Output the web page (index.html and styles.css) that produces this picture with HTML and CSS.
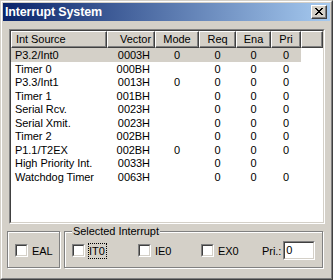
FILE: index.html
```html
<!DOCTYPE html>
<html>
<head>
<meta charset="utf-8">
<link rel="stylesheet" href="styles.css">
</head>
<body>
<div class="window">
  <div class="frame">
    <div class="caption">
      <span class="title">Interrupt System</span>
      <div class="close">
        <svg width="8" height="7" viewBox="0 0 8 7" shape-rendering="crispEdges">
          <path fill="#000" d="M0 0h2v1H0zM6 0h2v1H6zM1 1h2v1H1zM5 1h2v1H5zM2 2h4v1H2zM3 3h2v1H3zM2 4h4v1H2zM1 5h2v1H1zM5 5h2v1H5zM0 6h2v1H0zM6 6h2v1H6z"/>
        </svg>
      </div>
    </div>
    <div class="body">
      <div class="listbox">
        <div class="listinner">
          <div class="header">
            <div class="hcell c1 left">Int Source</div>
            <div class="hcell c2 right">Vector</div>
            <div class="hcell c3">Mode</div>
            <div class="hcell c4">Req</div>
            <div class="hcell c5">Ena</div>
            <div class="hcell c6">Pri</div>
            <div class="hcell cf"></div>
          </div>
          <div class="rows">
            <div class="row sel"><span class="c1 left">P3.2/Int0</span><span class="c2 right">0003H</span><span class="c3">0</span><span class="c4">0</span><span class="c5">0</span><span class="c6">0</span></div>
            <div class="row"><span class="c1 left">Timer 0</span><span class="c2 right">000BH</span><span class="c3"></span><span class="c4">0</span><span class="c5">0</span><span class="c6">0</span></div>
            <div class="row"><span class="c1 left">P3.3/Int1</span><span class="c2 right">0013H</span><span class="c3">0</span><span class="c4">0</span><span class="c5">0</span><span class="c6">0</span></div>
            <div class="row"><span class="c1 left">Timer 1</span><span class="c2 right">001BH</span><span class="c3"></span><span class="c4">0</span><span class="c5">0</span><span class="c6">0</span></div>
            <div class="row"><span class="c1 left">Serial Rcv.</span><span class="c2 right">0023H</span><span class="c3"></span><span class="c4">0</span><span class="c5">0</span><span class="c6">0</span></div>
            <div class="row"><span class="c1 left">Serial Xmit.</span><span class="c2 right">0023H</span><span class="c3"></span><span class="c4">0</span><span class="c5">0</span><span class="c6">0</span></div>
            <div class="row"><span class="c1 left">Timer 2</span><span class="c2 right">002BH</span><span class="c3"></span><span class="c4">0</span><span class="c5">0</span><span class="c6">0</span></div>
            <div class="row"><span class="c1 left">P1.1/T2EX</span><span class="c2 right">002BH</span><span class="c3">0</span><span class="c4">0</span><span class="c5">0</span><span class="c6">0</span></div>
            <div class="row"><span class="c1 left">High Priority Int.</span><span class="c2 right">0033H</span><span class="c3"></span><span class="c4">0</span><span class="c5">0</span><span class="c6"></span></div>
            <div class="row"><span class="c1 left">Watchdog Timer</span><span class="c2 right">0063H</span><span class="c3"></span><span class="c4">0</span><span class="c5">0</span><span class="c6">0</span></div>
          </div>
        </div>
      </div>
      <div class="bottom">
        <div class="group g-eal">
          <span class="cb"><span class="cbi"></span></span><span class="lbl">EAL</span>
        </div>
        <div class="group g-sel">
          <span class="legend">Selected Interrupt</span>
          <div class="item w1"><span class="cb"><span class="cbi"></span></span><span class="lbl focus">IT0</span></div>
          <div class="item w2"><span class="cb"><span class="cbi"></span></span><span class="lbl">IE0</span></div>
          <div class="item w3"><span class="cb"><span class="cbi"></span></span><span class="lbl">EX0</span></div>
          <span class="pri">Pri.:</span>
          <div class="num"><div class="numi">0</div></div>
        </div>
      </div>
    </div>
  </div>
</div>
</body>
</html>
```
FILE: styles.css
```css
* { box-sizing: border-box; }
html, body { margin: 0; padding: 0; }
body {
  width: 333px;
  height: 280px;
  overflow: hidden;
  background: #d4d0c8;
  font-family: "Liberation Sans", Arial, sans-serif;
  font-size: 11px;
  letter-spacing: -0.05px;
  color: #000;
}
.window {
  width: 333px;
  height: 280px;
  border: 1px solid;
  border-color: #d4d0c8 #404040 #404040 #d4d0c8;
  background: #d4d0c8;
}
.frame {
  height: 100%;
  border: 1px solid;
  border-color: #fff #808080 #808080 #fff;
  padding: 1px;
  display: flex;
  flex-direction: column;
}
.caption {
  height: 18px;
  flex: none;
  display: flex;
  align-items: center;
  background: linear-gradient(to right, #0a246a, #a6caf0);
  padding: 0 3px 0 2px;
}
.title {
  flex: 1;
  color: #fff;
  font-weight: bold;
  font-size: 12.5px;
  letter-spacing: -0.15px;
  line-height: 18px;
}
.close {
  width: 16px;
  height: 14px;
  border: 1px solid;
  border-color: #fff #404040 #404040 #fff;
  background: #d4d0c8;
  box-shadow: inset -1px -1px 0 #808080;
}
.close svg { display: block; margin: 2px 0 0 3px; }
.body {
  flex: 1;
  padding: 8px 0 0 4px;
  display: flex;
  flex-direction: column;
}
.listbox {
  margin-left: 2px;
  width: 316px;
  height: 195px;
  border: 1px solid;
  border-color: #808080 #fff #fff #808080;
}
.listinner {
  height: 100%;
  border: 1px solid;
  border-color: #404040 #d4d0c8 #d4d0c8 #404040;
  background: #fff;
  overflow: hidden;
}
.header { display: flex; height: 17px; }
.hcell {
  border: 1px solid;
  border-color: #fff #404040 #404040 #fff;
  box-shadow: inset -1px -1px 0 #808080;
  background: #d4d0c8;
  line-height: 15px;
  white-space: nowrap;
  text-align: center;
}
.c1 { width: 96px; flex: none; }
.c2 { width: 48px; flex: none; }
.c3 { width: 44px; flex: none; }
.c4 { width: 37px; flex: none; }
.c5 { width: 35px; flex: none; }
.c6 { width: 30px; flex: none; }
.cf { width: 22px; flex: none; }
.hcell.left { text-align: left; padding-left: 4px; }
.hcell.right { text-align: right; padding-right: 3px; }
.row {
  display: flex;
  width: 290px;
  height: 13.5px;
  line-height: 15px;
  white-space: nowrap;
}
.row span { text-align: center; }
.row span.left { text-align: left; padding-left: 4px; }
.row span.right { text-align: right; padding-right: 5px; }
.row.sel { background: #d4d0c8; }
.bottom {
  display: flex;
  gap: 4px;
  margin-top: 7px;
}
.group {
  position: relative;
  height: 37px;
  border: 1px solid #808080;
  box-shadow: inset 1px 1px 0 #fff, 1px 1px 0 #fff;
  display: flex;
  align-items: center;
  padding: 2px 0 0 7px;
}
.g-eal { width: 53px; }
.g-sel { width: 259px; }
.legend {
  position: absolute;
  top: -8px;
  left: 7px;
  padding: 0 1px;
  background: #d4d0c8;
  line-height: 14px;
  white-space: nowrap;
}
.item { display: flex; align-items: center; flex: none; }
.w1 { width: 66px; }
.w2 { width: 63px; }
.w3 { width: 61px; }
.cb {
  width: 13px;
  height: 13px;
  flex: none;
  border: 1px solid;
  border-color: #808080 #fff #fff #808080;
}
.cbi {
  display: block;
  height: 100%;
  border: 1px solid;
  border-color: #404040 #d4d0c8 #d4d0c8 #404040;
  background: #fff;
}
.lbl {
  margin-left: 3px;
  padding: 0 1px 0 0;
  border: 1px dotted transparent;
  line-height: 14px;
  white-space: nowrap;
}
.lbl.focus { border-color: #000; }
.pri { white-space: nowrap; }
.num {
  margin-left: 2px;
  width: 32px;
  height: 19px;
  border: 1px solid;
  border-color: #808080 #fff #fff #808080;
}
.numi {
  height: 100%;
  border: 1px solid;
  border-color: #404040 #d4d0c8 #d4d0c8 #404040;
  background: #fff;
  padding-left: 1px;
  line-height: 15px;
}
```
